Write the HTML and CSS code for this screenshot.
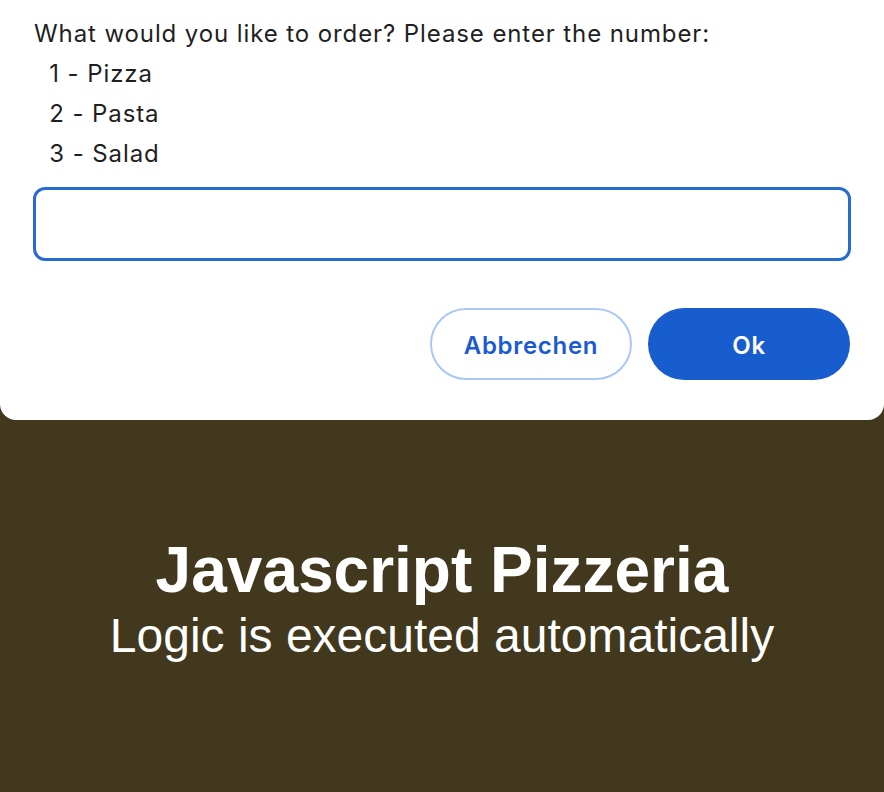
FILE: index.html
```html
<!DOCTYPE html>
<html>
<head>
<meta charset="utf-8">
<title>Javascript Pizzeria</title>
<link rel="stylesheet" href="styles.css">
</head>
<body>
<div class="dialog">
  <div class="message">What would you like to order? Please enter the number:
  1 - Pizza
  2 - Pasta
  3 - Salad</div>
  <div class="field"></div>
  <div class="actions">
    <button class="btn btn-cancel">Abbrechen</button>
    <button class="btn btn-ok">Ok</button>
  </div>
</div>
<main class="hero">
  <h1 class="title">Javascript Pizzeria</h1>
  <p class="subtitle">Logic is executed automatically</p>
</main>
</body>
</html>
```

FILE: styles.css
```css
html, body {
  margin: 0;
  padding: 0;
}
body {
  background: #42381e;
  width: 884px;
  height: 792px;
  overflow: hidden;
}
.dialog {
  background: #ffffff;
  border-radius: 0 0 16px 16px;
  padding: 14px 33px 40px 33px;
  font-family: Inter, "Noto Sans", sans-serif;
  color: #1f1f1f;
}
.message {
  white-space: pre;
  font-size: 24px;
  letter-spacing: 0.9px;
  line-height: 40px;
  padding-left: 1px;
}
.field {
  margin-top: 13px;
  height: 68px;
  border: 3px solid #2a6ad3;
  border-radius: 12px;
  background: #fff;
}
.actions {
  display: flex;
  justify-content: flex-end;
  gap: 16px;
  margin-top: 47px;
  padding-right: 1px;
}
.btn {
  width: 202px;
  height: 72px;
  border-radius: 36px;
  font-family: Inter, "Noto Sans", sans-serif;
  font-size: 24px;
  letter-spacing: 0.7px;
  font-weight: 600;
  padding: 2px 0 0 0;
  cursor: pointer;
}
.btn-cancel {
  background: #ffffff;
  border: 2px solid #a9c8f5;
  color: #1a5bcf;
}
.btn-ok {
  background: #185dcd;
  border: none;
  color: #ffffff;
}
.hero {
  margin-top: 114px;
  text-align: center;
  color: #ffffff;
  font-family: "Liberation Sans", Arial, sans-serif;
}
.title {
  margin: 0;
  font-size: 64px;
  font-weight: 700;
  line-height: 1.15;
}
.subtitle {
  margin: 0;
  font-size: 48px;
  line-height: 1.15;
}
```
